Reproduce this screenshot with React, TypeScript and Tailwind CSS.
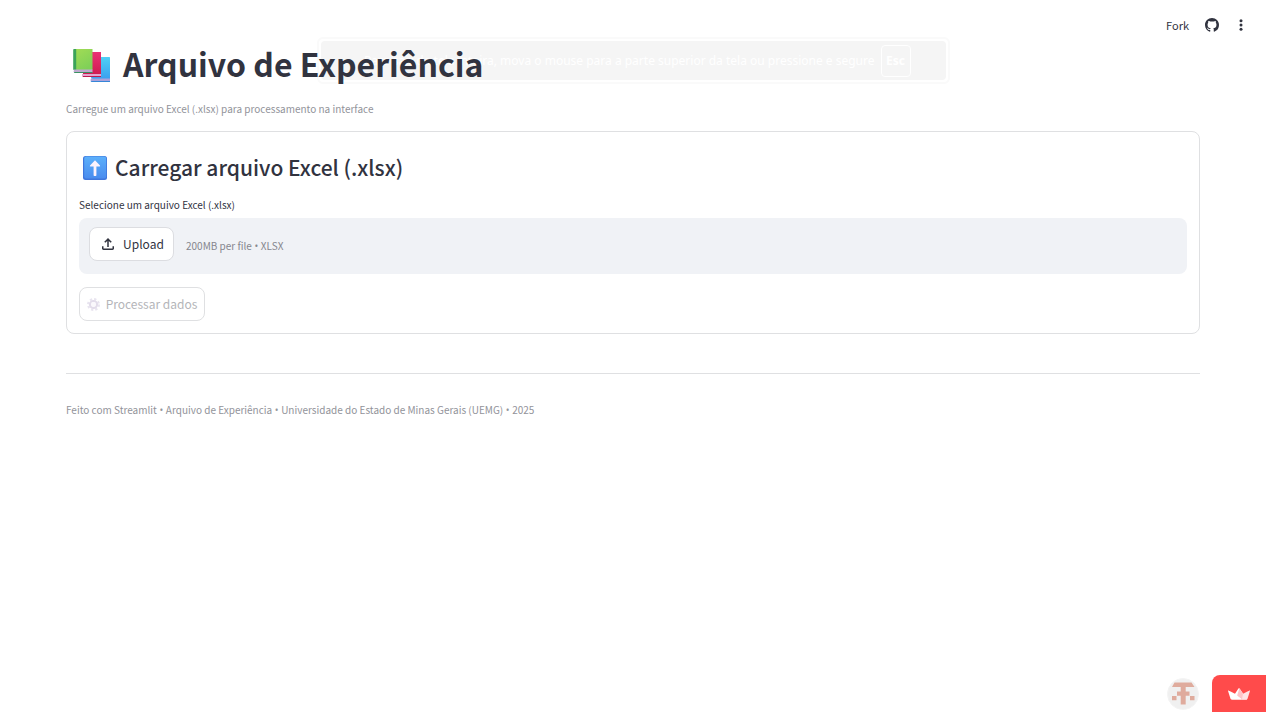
import React from "react";

function Books() {
  return (
    <svg viewBox="0 0 38 34" className="mt-1.5 h-[34px] w-[38px]" aria-hidden="true">
      <defs>
        <linearGradient id="green" x1="0" y1="0" x2="0.6" y2="1">
          <stop offset="0" stopColor="#a3dc55" />
          <stop offset="1" stopColor="#7fd058" />
        </linearGradient>
        <linearGradient id="blue" x1="0" y1="0" x2="0" y2="1">
          <stop offset="0" stopColor="#4fd0f5" />
          <stop offset="1" stopColor="#3aa0f0" />
        </linearGradient>
        <linearGradient id="red" x1="0" y1="0" x2="0" y2="1">
          <stop offset="0" stopColor="#ea3375" />
          <stop offset="1" stopColor="#cf1c50" />
        </linearGradient>
      </defs>
      <path d="M19 8h17.500q.500 0 .500.500v21.500H20q-2 0-2-2z" fill="url(#blue)" />
      <path d="M18 29.500h19v3H19q-1.500 0-1.500-1.500z" fill="#a9a2da" />
      <path d="M17.500 32h19.500v1H18.500z" fill="#3586d8" />
      <path d="M10 3h18v22.500H10z" fill="url(#red)" />
      <path d="M9 25h19v2.500H10q-1.500 0-1-2.500z" fill="#e4a4cf" />
      <path d="M9.500 27h18.500v1H10z" fill="#bd1c50" />
      <path d="M1 0h18.500v21H1z" fill="url(#green)" />
      <path d="M1 0h2.200v21H1q-.800 0-.800-1V1q0-1 .800-1z" fill="#3ba35a" />
      <path d="M1 20.500h18.500v3H1.500Q0 23 1 20.500z" fill="#bfa9cf" />
      <path d="M.800 23h18.700v1H1.500z" fill="#3a9262" />
    </svg>
  );
}

function ArrowUpTile() {
  return (
    <svg viewBox="0 0 24 24" className="size-6" aria-hidden="true">
      <defs>
        <linearGradient id="tile" x1="0" y1="0" x2="0" y2="1">
          <stop offset="0" stopColor="#5cb0fb" />
          <stop offset="1" stopColor="#4a8cee" />
        </linearGradient>
      </defs>
      <rect width="24" height="24" rx="2.500" fill="#3f76dc" />
      <rect x="1.200" y=".500" width="22" height="22" rx="2" fill="url(#tile)" />
      <path d="M12 4.300 17 9.600q.600 1-.600 1H13.400v8.700q0 .700-.700.700h-1.400q-.700 0-.700-.700v-8.700H7.600Q6.400 10.600 7 9.600z" fill="#fdf2fc" />
    </svg>
  );
}

function Gear() {
  return (
    <svg viewBox="0 0 24 24" className="size-[13px]" aria-hidden="true">
      <circle cx="12" cy="12" r="10" fill="none" stroke="#e8e4ef" strokeWidth="4" strokeDasharray="4.200 3.650" />
      <circle cx="12" cy="12" r="6.500" fill="none" stroke="#e2dcea" strokeWidth="4" />
      <circle cx="12" cy="12" r="4.500" fill="#faf8fc" />
    </svg>
  );
}

function UploadIcon() {
  return (
    <svg viewBox="0 0 24 24" className="size-[18px]" fill="#31333f" aria-hidden="true">
      <path d="M11 16V7.850l-2.600 2.600L7 9l5-5 5 5-1.400 1.450-2.600-2.600V16zm-5 4q-.825 0-1.412-.587T4 18v-3h2v3h12v-3h2v3q0 .825-.587 1.413T18 20z" />
    </svg>
  );
}

function GitHub() {
  return (
    <svg viewBox="0 0 16 16" className="size-[14px]" fill="#31333f" aria-hidden="true">
      <path d="M8 0C3.580 0 0 3.580 0 8c0 3.540 2.290 6.530 5.470 7.590.4.070.55-.17.55-.38 0-.19-.01-.82-.01-1.490-2.010.37-2.530-.49-2.690-.94-.09-.23-.48-.94-.82-1.130-.28-.15-.68-.52-.01-.53.63-.01 1.080.58 1.230.82.72 1.210 1.870.87 2.330.66.07-.52.28-.87.51-1.070-1.780-.2-3.640-.89-3.640-3.950 0-.87.31-1.590.82-2.150-.08-.2-.36-1.020.08-2.120 0 0 .67-.21 2.200.82.64-.18 1.320-.27 2-.27s1.360.09 2 .27c1.530-1.040 2.200-.82 2.200-.82.44 1.100.16 1.920.08 2.120.51.56.82 1.270.82 2.150 0 3.070-1.870 3.750-3.650 3.950.29.25.54.73.54 1.480 0 1.070-.01 1.930-.01 2.200 0 .21.15.46.55.38A8.010 8.010 0 0 0 16 8c0-4.420-3.580-8-8-8" />
    </svg>
  );
}

function Dot() {
  return <span className="font-['Open_Sans',sans-serif]"> • </span>;
}

function Toolbar() {
  return (
    <header className="flex h-[50px] items-center justify-end gap-4 pr-[19px]">
      <button type="button" className="text-[11px] leading-4">Fork</button>
      <a href="#github" aria-label="GitHub"><GitHub /></a>
      <button type="button" aria-label="Menu" className="flex w-3 justify-center">
        <svg viewBox="0 0 4 12" className="h-3 w-1" fill="#31333f" aria-hidden="true">
          <circle cx="2" cy="1.700" r="1.500" />
          <circle cx="2" cy="6" r="1.500" />
          <circle cx="2" cy="10.300" r="1.500" />
        </svg>
      </button>
    </header>
  );
}

function FullscreenHint() {
  return (
    <div className="pointer-events-none absolute inset-x-0 top-[37px] flex justify-center">
      <div className="w-1/2 rounded-md border-2 border-[#fafafa] bg-white p-0.5">
        <div className="flex h-[39px] items-center justify-end gap-1.5 rounded-sm bg-[#f5f5f5] pr-[35px] font-['Noto_Sans',sans-serif] text-[12px] whitespace-nowrap text-white">
          <span>Para sair da tela inteira, mova o mouse para a parte superior da tela ou pressione e segure</span>
          <kbd className="flex h-8 w-[30px] items-center justify-center rounded-sm border border-white font-['Noto_Sans',sans-serif] font-bold">Esc</kbd>
        </div>
      </div>
    </div>
  );
}

export default function App() {
  return (
    <div className="relative min-h-screen bg-white font-['Noto_Sans_CJK_SC',sans-serif] text-[#31333f]">
      <FullscreenHint />
      <Toolbar />
      <main className="relative -mt-[9px] px-[66px]">
        <h1 className="flex h-11 items-center gap-3 pl-[7px] text-[32px] font-bold">
          <Books />
          Arquivo de Experiência
        </h1>
        <p className="mt-4 text-[10px] leading-4 text-[#92939a]">
          Carregue um arquivo Excel (.xlsx) para processamento na interface
        </p>
        <section className="mt-[14px] rounded-lg border border-[#dfe0e2] p-3">
          <h2 className="mt-2 flex h-8 items-center gap-2 pl-1 text-[21px] font-medium">
            <ArrowUpTile />
            Carregar arquivo Excel (.xlsx)
          </h2>
          <label htmlFor="upload" className="mt-[13px] block text-[10px] leading-4">
            Selecione um arquivo Excel (.xlsx)
          </label>
          <div className="mt-[5px] flex h-14 items-start gap-3 rounded-lg bg-[#f0f2f6] px-[10px] pt-[9px]">
            <button id="upload" type="button" className="flex h-[34px] w-[85px] items-center justify-center gap-1.5 rounded-lg border border-[#dcdde1] bg-white text-[12px]">
              <UploadIcon />
              Upload
            </button>
            <span className="mt-[11px] text-[10px] leading-4 text-[#85868e]">200MB per file<Dot />XLSX</span>
          </div>
          <button type="button" disabled className="mt-[13px] flex h-[34px] w-[126px] items-center justify-center gap-1.5 rounded-lg border border-[#dfe0e2] text-[12px] text-[#b4b5b9]">
            <Gear />
            Processar dados
          </button>
        </section>
        <hr className="mt-[39px] border-[#dfe0e2]" />
        <p className="mt-7 text-[10px] leading-4 text-[#92939a]">
          Feito com Streamlit<Dot />Arquivo de Experiência<Dot />Universidade do Estado de Minas Gerais (UEMG)<Dot />2025
        </p>
      </main>
      <div className="fixed right-0 bottom-0 flex items-end gap-[13px]">
        <a href="#profile" aria-label="Profile" className="mb-0.5 block size-8 overflow-hidden rounded-full border border-[#f4f4f4] bg-[#f0f0f0]">
          <svg viewBox="0 0 30 30" className="size-full" fill="#dfab9d" aria-hidden="true">
            <path d="M6.500 3.500h17L26.500 8H4zM12.700 8h5v17.500h-5zM9 12.500h12.500v4.300H9zM4 17h4.500v4.300H4zM22 17h4.500v4.300H22z" />
          </svg>
        </a>
        <a href="#streamlit" aria-label="Streamlit" className="flex h-[37px] w-[54px] items-center justify-center rounded-tl-lg bg-[#ff4b4b]">
          <svg viewBox="0 0 22 12" className="h-3 w-[22px]" aria-hidden="true">
            <path d="M10.600.300Q11 0 11.400.300L19 11.500H3.500L7 5.800z" fill="#fff" />
            <path d="M11.400.300 15 5.800 19 11.500h-5L9 8z" fill="#ffc4c8" />
            <path d="M0 2.800q0-.600.600-.400L7 5.800l7 5.700H3.500q-.700 0-1-.700z" fill="#fff" />
            <path d="M22 2.800q0-.600-.600-.400L15 5.800l-1 5.700h4.500q.700 0 1-.700z" fill="#ffe3e5" />
          </svg>
        </a>
      </div>
    </div>
  );
}
